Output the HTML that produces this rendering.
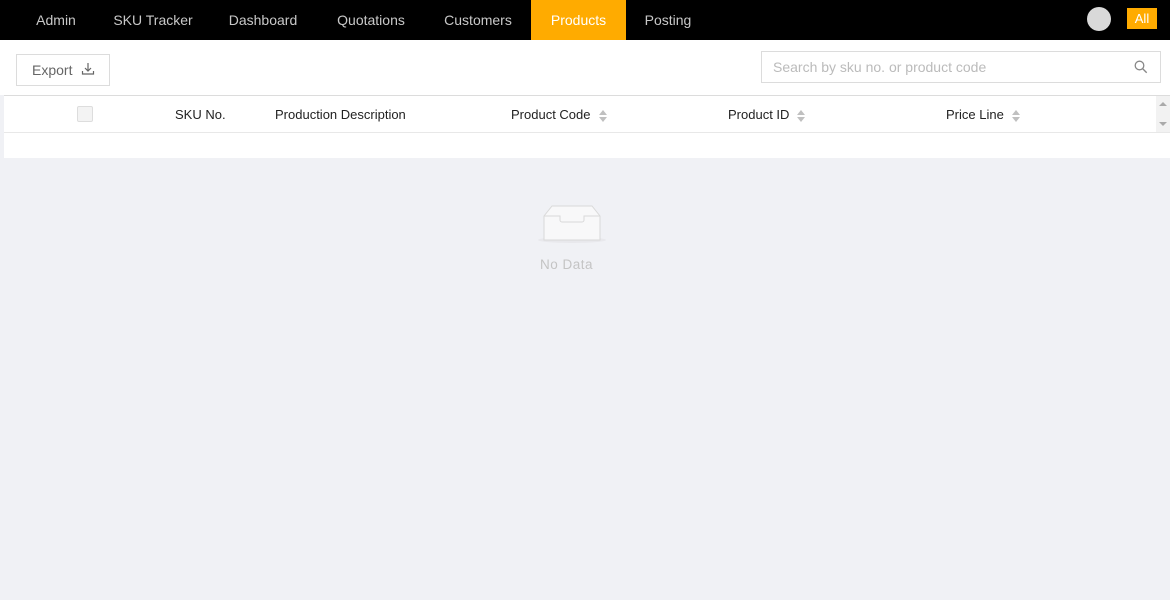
<!DOCTYPE html>
<html><head><meta charset="utf-8"><style>
*{margin:0;padding:0;box-sizing:border-box}
body{width:1170px;height:600px;background:#f0f1f5;font-family:"Liberation Sans",sans-serif;overflow:hidden;position:relative}
.nav{position:absolute;left:0;top:0;width:1170px;height:40px;background:#000}
.nav span{position:absolute;top:0;height:40px;line-height:40px;font-size:14px;color:#c8c8c8;transform:translateX(-50%);white-space:nowrap}
.nav .act{background:#ffab00;color:#fff;left:531px;width:95px;transform:none;text-align:center}
.avatar{position:absolute;left:1087px;top:7px;width:24px;height:24px;border-radius:50%;background:#d9d9d9}
.all{position:absolute;left:1127px;top:8px;width:30px;height:21px;background:#ffab00;color:#fff;font-size:13px;line-height:21px;text-align:center}
.bar{position:absolute;left:0;top:40px;width:1170px;height:55px;background:#fff}
.export{position:absolute;left:16px;top:14px;width:94px;height:32px;border:1px solid #dcdcdc;font-size:14px;color:#666;line-height:30px;padding-left:15px}
.search{position:absolute;left:761px;top:11px;width:400px;height:32px;border:1px solid #dcdcdc;font-size:14px;color:#bbb;line-height:30px;padding-left:11px}
.tbl{position:absolute;left:4px;top:95px;width:1166px;height:63px;background:#fff;border-top:1px solid #dcdcdc}
.hrow{position:absolute;left:0;top:0;width:1166px;height:37px;border-bottom:1px solid #e8e8e8}
.hrow span{position:absolute;top:0;line-height:37px;font-size:13px;color:#222}
.cb{position:absolute;left:73px;top:10px;width:16px;height:16px;border:1px solid #ddd;background:#f3f3f3;border-radius:2px}
.sort{display:inline-block;vertical-align:middle;margin-left:8px;width:8px;height:14px;position:relative}
.sort:before,.sort:after{content:"";position:absolute;left:0;border-left:4px solid transparent;border-right:4px solid transparent}
.sort:before{top:1px;border-bottom:5px solid #c0c0c0}
.sort:after{bottom:1px;border-top:5px solid #c0c0c0}
.sb{position:absolute;right:0;top:0;width:14px;height:36px;background:#f2f2f2}
.nd{position:absolute;left:540px;top:257px;font-size:13.5px;color:#c4c4c4;letter-spacing:.5px}
</style></head><body>
<div class="nav">
<span style="left:56px">Admin</span>
<span style="left:153px">SKU Tracker</span>
<span style="left:263px">Dashboard</span>
<span style="left:371px">Quotations</span>
<span style="left:478px">Customers</span>
<span class="act">Products</span>
<span style="left:668px">Posting</span>
<div class="avatar"></div><div class="all">All</div>
</div>
<div class="bar">
<div class="export">Export <svg width="14" height="14" viewBox="0 0 14 14" style="vertical-align:-1px;margin-left:5px"><path d="M7 1v8M4 6l3 3 3-3M1.5 9v3h11V9" fill="none" stroke="#666" stroke-width="1.2"/></svg></div>
<div class="search">Search by sku no. or product code
<svg width="14" height="14" viewBox="0 0 14 14" style="position:absolute;right:12px;top:8px"><circle cx="5.5" cy="5.5" r="4.3" fill="none" stroke="#888" stroke-width="1.3"/><path d="M8.7 8.7l4 4" stroke="#888" stroke-width="1.4"/></svg></div>
</div>
<div class="tbl">
<div class="hrow">
<div class="cb"></div>
<span style="left:171px">SKU No.</span>
<span style="left:271px">Production Description</span>
<span style="left:507px">Product Code<i class="sort"></i></span>
<span style="left:724px">Product ID<i class="sort"></i></span>
<span style="left:942px">Price Line<i class="sort"></i></span>
<div class="sb"><svg width="14" height="36"><path d="M3 10l4-4 4 4z" fill="#aaa"/><path d="M3 26l4 4 4-4z" fill="#aaa"/></svg></div>
</div>
</div>
<svg style="position:absolute;left:534px;top:200px" width="76" height="48" viewBox="0 0 76 48">
<ellipse cx="38" cy="40" rx="34" ry="3" fill="#e8e8ec"/>
<path d="M10 16l8-10h40l8 10v24H10z" fill="#f8f8f9" stroke="#d9d9d9"/>
<path d="M10 16h16v4a2 2 0 0 0 2 2h20a2 2 0 0 0 2-2v-4h16" fill="none" stroke="#d9d9d9"/>
</svg>
<div class="nd">No Data</div>
</body></html>
